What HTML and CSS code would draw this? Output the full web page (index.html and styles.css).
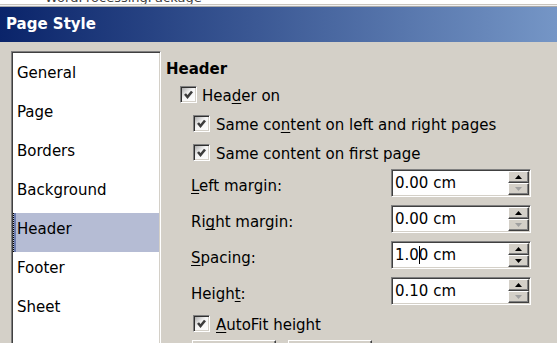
FILE: index.html
```html
<!DOCTYPE html>
<html lang="en">
<head>
    <meta charset="UTF-8">
    <meta name="viewport" content="width=device-width, initial-scale=1.0">
    <title>Page Style</title>
    <link rel="stylesheet" href="styles.css">
</head>
<body>
    <div class="behind"><span>WordProcessingPackage</span></div>
    <div class="frame-edge"></div>
    <div class="title-bar">Page Style</div>

    <div class="dialog">
        <ul class="page-list">
            <li>General</li>
            <li>Page</li>
            <li>Borders</li>
            <li>Background</li>
            <li class="selected">Header</li>
            <li>Footer</li>
            <li>Sheet</li>
        </ul>

        <div class="panel">
            <h2>Header</h2>

            <div class="check-row">
                <span class="checkbox"><svg viewBox="0 0 13 13" width="13" height="13"><polyline points="3,6 5.5,9 10,3.5" /></svg></span>
                <span>Hea<u>d</u>er on</span>
            </div>
            <div class="check-row sub">
                <span class="checkbox"><svg viewBox="0 0 13 13" width="13" height="13"><polyline points="3,6 5.5,9 10,3.5" /></svg></span>
                <span>Same co<u>n</u>tent on left and right pages</span>
            </div>
            <div class="check-row sub">
                <span class="checkbox"><svg viewBox="0 0 13 13" width="13" height="13"><polyline points="3,6 5.5,9 10,3.5" /></svg></span>
                <span>Same content on first page</span>
            </div>

            <div class="field-row first">
                <span class="field-label"><u>L</u>eft margin:</span>
                <div class="spin-field">
                    <span class="spin-value">0.00 cm</span>
                    <div class="spin-buttons">
                        <span class="spin-btn"><svg class="arrow" viewBox="0 0 7 4" width="7" height="4"><polygon points="0,4 7,4 3.5,0" /></svg></span>
                        <span class="spin-btn off"><svg class="arrow" viewBox="0 0 7 4" width="7" height="4"><polygon points="0,0 7,0 3.5,4" /></svg></span>
                    </div>
                </div>
            </div>
            <div class="field-row">
                <span class="field-label">Ri<u>g</u>ht margin:</span>
                <div class="spin-field">
                    <span class="spin-value">0.00 cm</span>
                    <div class="spin-buttons">
                        <span class="spin-btn"><svg class="arrow" viewBox="0 0 7 4" width="7" height="4"><polygon points="0,4 7,4 3.5,0" /></svg></span>
                        <span class="spin-btn off"><svg class="arrow" viewBox="0 0 7 4" width="7" height="4"><polygon points="0,0 7,0 3.5,4" /></svg></span>
                    </div>
                </div>
            </div>
            <div class="field-row">
                <span class="field-label"><u>S</u>pacing:</span>
                <div class="spin-field">
                    <span class="spin-value">1.0<span class="caret"></span>0 cm</span>
                    <div class="spin-buttons">
                        <span class="spin-btn"><svg class="arrow" viewBox="0 0 7 4" width="7" height="4"><polygon points="0,4 7,4 3.5,0" /></svg></span>
                        <span class="spin-btn"><svg class="arrow" viewBox="0 0 7 4" width="7" height="4"><polygon points="0,0 7,0 3.5,4" /></svg></span>
                    </div>
                </div>
            </div>
            <div class="field-row">
                <span class="field-label">Heigh<u>t</u>:</span>
                <div class="spin-field">
                    <span class="spin-value">0.10 cm</span>
                    <div class="spin-buttons">
                        <span class="spin-btn"><svg class="arrow" viewBox="0 0 7 4" width="7" height="4"><polygon points="0,4 7,4 3.5,0" /></svg></span>
                        <span class="spin-btn off"><svg class="arrow" viewBox="0 0 7 4" width="7" height="4"><polygon points="0,0 7,0 3.5,4" /></svg></span>
                    </div>
                </div>
            </div>

            <div class="check-row sub autofit">
                <span class="checkbox"><svg viewBox="0 0 13 13" width="13" height="13"><polyline points="3,6 5.5,9 10,3.5" /></svg></span>
                <span><u>A</u>utoFit height</span>
            </div>

            <div class="button-row">
                <span class="push-btn"></span>
                <span class="push-btn"></span>
            </div>
        </div>
    </div>
</body>
</html>
```

FILE: styles.css
```css
body {
    margin: 0;
    background-color: #d4d0c8;
    font-family: "DejaVu Sans", sans-serif;
    font-size: 15px;
    line-height: 18px;
    color: #000000;
    overflow: hidden;
}

u {
    text-underline-offset: 2px;
    text-decoration-skip-ink: none;
}

/* window behind the dialog, only its bottom edge shows */
.behind {
    height: 4px;
    overflow: hidden;
    background-color: #ffffff;
    padding-left: 45px;
}

.behind span {
    display: block;
    margin-top: -10px;
    font-size: 13px;
    line-height: 16px;
    color: #404040;
}

.frame-edge {
    height: 1px;
    border-top: 1px solid #c8c4bc;
    border-bottom: 1px solid #a8a8a8;
    background-color: #f0f0f0;
}

.title-bar {
    height: 35px;
    line-height: 35px;
    padding-left: 6px;
    font-weight: bold;
    color: #ffffff;
    background: linear-gradient(to right, #0a246a 0px, #a6caf0 812px);
}

.dialog {
    display: flex;
    gap: 5px;
    padding: 9px 0 0 11px;
}

/* left list of tabs */
.page-list {
    list-style: none;
    margin: 0;
    padding: 5px 1px 0 1px;
    width: 150px;
    height: 300px;
    box-sizing: border-box;
    background-color: #ffffff;
    border-top: 1px solid #808080;
    border-left: 1px solid #808080;
    border-right: 1px solid #ffffff;
    border-bottom: 1px solid #ffffff;
    box-shadow: inset 1px 1px 0 #404040, inset -1px -1px 0 #d4d0c8;
}

.page-list li {
    height: 39px;
    box-sizing: border-box;
    padding: 7px 0 0 4px;
}

.page-list li.selected {
    background-color: #b5bcd4;
    border-left: 1px dotted #000000;
    padding-left: 3px;
    box-shadow: inset 2px 0 0 #6c7cae;
}

/* right panel */
.panel {
    flex: 1;
    padding-top: 9px;
}

.panel h2 {
    margin: 0 0 3px 0;
    font-size: 15px;
    line-height: 18px;
    font-weight: bold;
}

.check-row {
    display: flex;
    align-items: center;
    gap: 5px;
    height: 29px;
    padding-left: 14px;
}

.check-row.sub {
    gap: 6px;
    padding-left: 27px;
}

.check-row.autofit {
    margin-top: 5px;
}

.checkbox {
    width: 17px;
    height: 17px;
    box-sizing: border-box;
    margin-bottom: 3px;
    display: flex;
    border-top: 1px solid #808080;
    border-left: 1px solid #808080;
    border-right: 1px solid #ffffff;
    border-bottom: 1px solid #ffffff;
    box-shadow: inset 1px 1px 0 #303030, inset -1px -1px 0 #d4d0c8;
    background: linear-gradient(135deg, #a0a0a0 0%, #f4f4f4 45%, #ffffff 100%);
    padding: 1px;
}

.checkbox svg polyline {
    fill: none;
    stroke: #3c3c3c;
    stroke-width: 2.6;
    stroke-linejoin: miter;
}

.field-row {
    display: flex;
    align-items: center;
    height: 28px;
    margin-top: 8px;
    padding-left: 25px;
}

.field-row.first {
    margin-top: 1px;
}

.field-label {
    width: 200px;
    padding-top: 6px;
}

.spin-field {
    width: 140px;
    height: 28px;
    box-sizing: border-box;
    display: flex;
    background-color: #ffffff;
    border-top: 1px solid #808080;
    border-left: 1px solid #808080;
    border-right: 1px solid #ffffff;
    border-bottom: 1px solid #ffffff;
    box-shadow: inset 1px 1px 0 #404040, inset -1px -1px 0 #d4d0c8;
    padding: 1px;
}

.spin-value {
    flex: 1;
    padding-left: 2px;
    line-height: 25px;
}

.caret {
    display: inline-block;
    width: 1px;
    height: 18px;
    margin-right: -1px;
    vertical-align: -4px;
    background-color: #000000;
}

.spin-buttons {
    width: 21px;
    display: flex;
    flex-direction: column;
}

.spin-btn {
    flex: 1;
    display: flex;
    align-items: center;
    justify-content: center;
    background-color: #d4d0c8;
    border-top: 1px solid #ffffff;
    border-left: 1px solid #ffffff;
    border-right: 1px solid #404040;
    border-bottom: 1px solid #404040;
    box-shadow: inset -1px -1px 0 #808080;
}

.spin-btn .arrow {
    fill: #000000;
}

.spin-btn.off .arrow {
    fill: #a0a0a0;
}

.button-row {
    display: flex;
    gap: 12px;
    margin-top: 1px;
    padding-left: 26px;
}

.push-btn {
    width: 84px;
    height: 26px;
    box-sizing: border-box;
    background-color: #d4d0c8;
    border-top: 1px solid #ffffff;
    border-left: 1px solid #ffffff;
    border-right: 1px solid #404040;
    border-bottom: 1px solid #404040;
    box-shadow: inset -1px -1px 0 #808080;
}
```
